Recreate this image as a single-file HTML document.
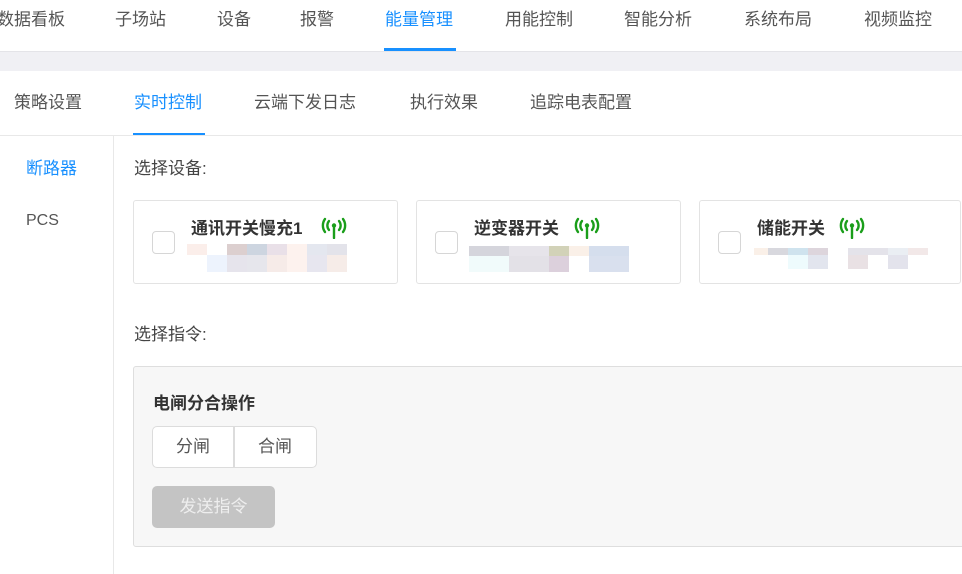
<!DOCTYPE html>
<html><head><meta charset="utf-8"><style>
*{margin:0;padding:0;box-sizing:border-box}
body{width:962px;height:574px;overflow:hidden;background:#fff;font-family:"Liberation Sans","Noto Sans CJK SC",sans-serif;color:#555;position:relative}
.a{position:absolute;white-space:nowrap}
.t{font-size:17px;color:#555;line-height:20px}
.card{position:absolute;top:200px;height:84px;border:1px solid #e3e3e3;border-radius:3px;background:#fff}
.cb{position:absolute;left:18px;top:30px;width:23px;height:23px;border:1px solid #d6d6d6;border-radius:4px;background:#fff}
.ct{position:absolute;left:57px;top:18px;font-size:17px;font-weight:bold;color:#333;line-height:20px}
</style></head><body>
<div class="a t" style="left:-3px;top:10px">数据看板</div>
<div class="a t" style="left:115px;top:10px">子场站</div>
<div class="a t" style="left:217px;top:10px">设备</div>
<div class="a t" style="left:300px;top:10px">报警</div>
<div class="a t" style="left:385px;top:10px;color:#1890ff">能量管理</div>
<div class="a" style="left:384px;top:48px;width:72px;height:3px;background:#1890ff"></div>
<div class="a t" style="left:505px;top:10px">用能控制</div>
<div class="a t" style="left:624px;top:10px">智能分析</div>
<div class="a t" style="left:744px;top:10px">系统布局</div>
<div class="a t" style="left:864px;top:10px">视频监控</div>
<div class="a" style="left:0;top:51px;width:962px;height:20px;background:#f0f0f4;border-top:1px solid #e4e4e8"></div>
<div class="a t" style="left:14px;top:93px">策略设置</div>
<div class="a t" style="left:134px;top:93px;color:#1890ff">实时控制</div>
<div class="a" style="left:133px;top:133px;width:72px;height:3px;background:#1890ff"></div>
<div class="a t" style="left:254px;top:93px">云端下发日志</div>
<div class="a t" style="left:410px;top:93px">执行效果</div>
<div class="a t" style="left:530px;top:93px">追踪电表配置</div>
<div class="a" style="left:0;top:135px;width:962px;height:1px;background:#e8e8e8"></div>
<div class="a" style="left:113px;top:135px;width:1px;height:439px;background:#e8e8e8"></div>
<div class="a t" style="left:26px;top:159px;color:#1890ff">断路器</div>
<div class="a t" style="left:26px;top:211px;font-size:16px">PCS</div>
<div class="a t" style="left:134px;top:159px;color:#444">选择设备:</div>

<div class="card" style="left:133px;width:265px"><div class="cb"></div><div class="ct">通讯开关慢充1</div>
<svg class="a" style="left:187px;top:16px" width="26" height="22" viewBox="0 0 26 22"><g fill="none" stroke="#1a9e1a" stroke-width="2.4" stroke-linecap="round"><path d="M8 4a7 7 0 0 0 0 9"/><path d="M18 4a7 7 0 0 1 0 9"/><path d="M4 2a11 11 0 0 0 0 13"/><path d="M22 2a11 11 0 0 1 0 13"/><path d="M13 9v12"/></g><circle cx="13" cy="8.5" r="2.2" fill="#1a9e1a"/></svg>
<svg class="a" style="left:53px;top:43px" width="170" height="28"><rect x="0" y="0" width="20" height="11" fill="#fbeeea"/><rect x="40" y="0" width="20" height="11" fill="#dccfcf"/><rect x="60" y="0" width="20" height="11" fill="#cdd5e0"/><rect x="80" y="0" width="20" height="11" fill="#e9e0e8"/><rect x="100" y="0" width="20" height="11" fill="#fdf2ee"/><rect x="120" y="0" width="20" height="11" fill="#e4e7ef"/><rect x="140" y="0" width="20" height="11" fill="#e3e3ea"/><rect x="20" y="11" width="20" height="17" fill="#edf3fd"/><rect x="40" y="11" width="20" height="17" fill="#e6e4ec"/><rect x="60" y="11" width="20" height="17" fill="#e6e6ec"/><rect x="80" y="11" width="20" height="17" fill="#f6ebe8"/><rect x="100" y="11" width="20" height="17" fill="#fdf2ee"/><rect x="120" y="11" width="20" height="17" fill="#e7e6ef"/><rect x="140" y="11" width="20" height="17" fill="#f6ece8"/></svg></div>

<div class="card" style="left:416px;width:265px"><div class="cb"></div><div class="ct">逆变器开关</div>
<svg class="a" style="left:157px;top:16px" width="26" height="22" viewBox="0 0 26 22"><g fill="none" stroke="#1a9e1a" stroke-width="2.4" stroke-linecap="round"><path d="M8 4a7 7 0 0 0 0 9"/><path d="M18 4a7 7 0 0 1 0 9"/><path d="M4 2a11 11 0 0 0 0 13"/><path d="M22 2a11 11 0 0 1 0 13"/><path d="M13 9v12"/></g><circle cx="13" cy="8.5" r="2.2" fill="#1a9e1a"/></svg>
<svg class="a" style="left:52px;top:45px" width="170" height="27"><rect x="0" y="0" width="40" height="10" fill="#d5d5dc"/><rect x="40" y="0" width="40" height="10" fill="#e6e4ea"/><rect x="80" y="0" width="20" height="10" fill="#d2d2b8"/><rect x="100" y="0" width="20" height="10" fill="#faf0e8"/><rect x="120" y="0" width="40" height="10" fill="#d5deed"/><rect x="0" y="10" width="40" height="16" fill="#f1fbfb"/><rect x="40" y="10" width="40" height="16" fill="#e3e1e7"/><rect x="80" y="10" width="20" height="16" fill="#dcd0dc"/><rect x="120" y="10" width="40" height="16" fill="#d9e0ee"/></svg></div>

<div class="card" style="left:699px;width:262px"><div class="cb"></div><div class="ct">储能开关</div>
<svg class="a" style="left:139px;top:16px" width="26" height="22" viewBox="0 0 26 22"><g fill="none" stroke="#1a9e1a" stroke-width="2.4" stroke-linecap="round"><path d="M8 4a7 7 0 0 0 0 9"/><path d="M18 4a7 7 0 0 1 0 9"/><path d="M4 2a11 11 0 0 0 0 13"/><path d="M22 2a11 11 0 0 1 0 13"/><path d="M13 9v12"/></g><circle cx="13" cy="8.5" r="2.2" fill="#1a9e1a"/></svg>
<svg class="a" style="left:54px;top:47px" width="180" height="22"><rect x="0" y="0" width="14" height="7" fill="#faf0e8"/><rect x="14" y="0" width="20" height="7" fill="#d8d8de"/><rect x="34" y="0" width="20" height="7" fill="#cfe3ee"/><rect x="54" y="0" width="20" height="7" fill="#ddd5dc"/><rect x="94" y="0" width="40" height="7" fill="#e4e3ea"/><rect x="134" y="0" width="20" height="7" fill="#eaeef3"/><rect x="154" y="0" width="20" height="7" fill="#f2e8e8"/><rect x="34" y="7" width="20" height="14" fill="#eefbfd"/><rect x="54" y="7" width="20" height="14" fill="#e2e5ee"/><rect x="94" y="7" width="20" height="14" fill="#e9e1e4"/><rect x="134" y="7" width="20" height="14" fill="#e3e3ec"/></svg></div>

<div class="a t" style="left:134px;top:325px;color:#444">选择指令:</div>
<div class="a" style="left:133px;top:366px;width:840px;height:181px;background:#f7f7f7;border:1px solid #dedede;border-radius:3px"></div>
<div class="a" style="left:153px;top:389px;font-size:17px;font-weight:bold;color:#333">电闸分合操作</div>
<div class="a" style="left:152px;top:426px;width:165px;height:42px;background:#fff;border:1px solid #dcdcdc;border-radius:5px"></div>
<div class="a" style="left:233px;top:426px;width:2px;height:42px;background:#dcdcdc"></div>
<div class="a t" style="left:176px;top:437px;font-size:17px">分闸</div>
<div class="a t" style="left:258px;top:437px;font-size:17px">合闸</div>
<div class="a" style="left:152px;top:486px;width:123px;height:42px;background:#c4c4c4;border-radius:5px;color:#eee;font-size:17px;line-height:42px;text-align:center">发送指令</div>
</body></html>
